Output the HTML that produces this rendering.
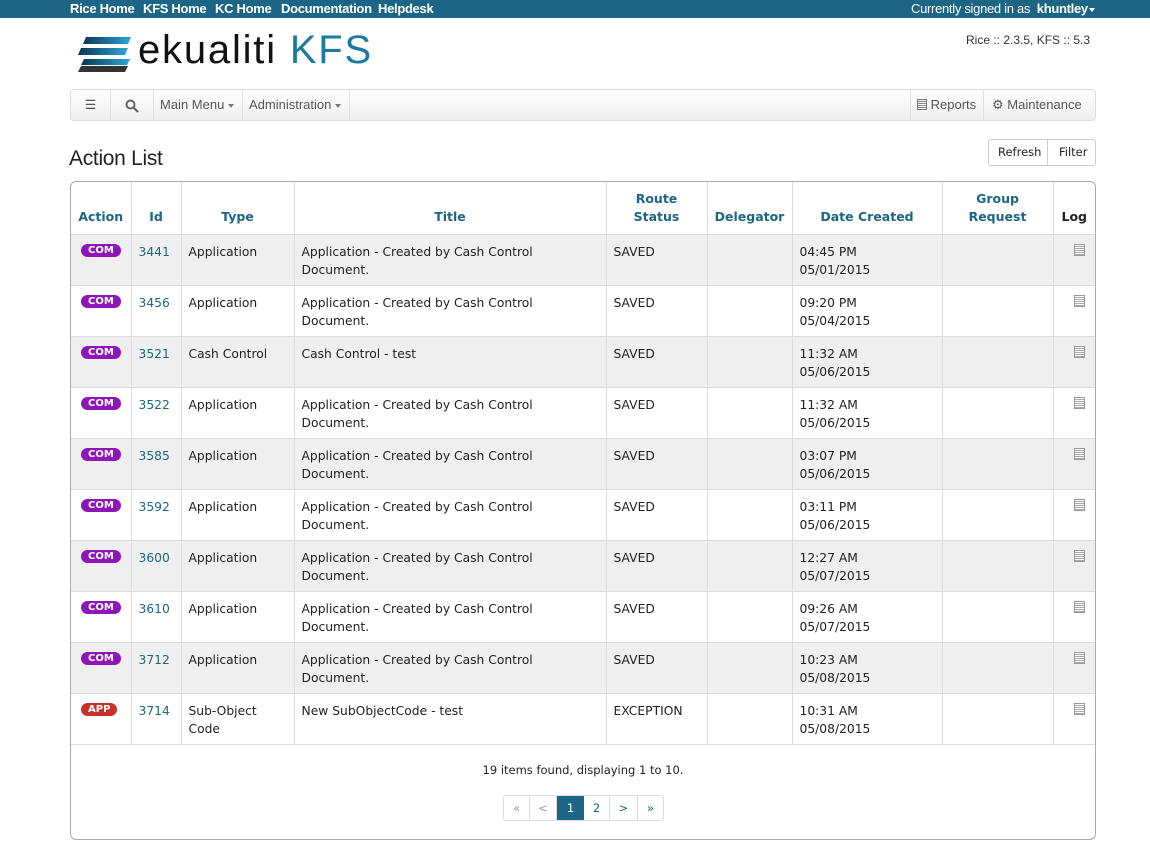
<!DOCTYPE html>
<html><head><meta charset="utf-8"><style>
*{box-sizing:border-box}
body{margin:0;width:1150px;height:861px;background:#fff;font-family:"Liberation Sans",Arial,sans-serif;position:relative;overflow:hidden}
.top{position:absolute;left:0;top:0;width:1150px;height:18px;background:#1c6584;color:#fff;font-size:13px;font-weight:bold;line-height:17px;letter-spacing:-0.3px}
.top span{margin-right:11px}
.nav{position:absolute;left:70px;top:89px;width:1026px;height:32px;border:1px solid #ddd;border-radius:4px;background:linear-gradient(#fff,#efefef);font-size:13px;color:#555}
.nav div{position:absolute;top:0;height:30px;line-height:30px;border-right:1px solid #e0e0e0}
.caret{display:inline-block;border-top:4px solid #777;border-left:3px solid transparent;border-right:3px solid transparent;vertical-align:middle;margin-left:4px}
table{border-collapse:collapse;font-family:"DejaVu Sans",Verdana,sans-serif;font-size:12.3px;color:#222}
td,th{border-left:1px solid #ddd;border-bottom:1px solid #ddd;vertical-align:top;padding:8px 7px 0}
td:first-child,th:first-child{border-left:none}
td:first-child{padding-left:10px}
th{color:#1c6584;font-size:12.5px;vertical-align:bottom;padding:0 4px 8px;line-height:18px;height:52px}
tr.g td{background:#efefef}
td{height:51px;line-height:18px}
.b{display:inline-block;color:#fff;font-size:10px;font-weight:bold;border-radius:8px;padding:0 7px;line-height:13px;vertical-align:top;margin-top:1px}
.id{color:#1c6584}
.log{display:inline-block;width:11px;height:12px;border:1px solid #999;background:repeating-linear-gradient(#fff 0 1px,#aaa 1px 2px);margin-left:13px}
</style></head><body>
<div class="top"><span style="position:absolute;left:70px">Rice Home</span><span style="position:absolute;left:143px">KFS Home</span><span style="position:absolute;left:215px">KC Home</span><span style="position:absolute;left:281px">Documentation</span><span style="position:absolute;left:378px">Helpdesk</span><span style="position:absolute;left:911px;font-weight:normal">Currently signed in as &nbsp;<b>khuntley</b><span class="caret" style="border-top-color:#fff;margin-left:1px"></span></span></div>
<svg style="position:absolute;left:78px;top:36px" width="54" height="38"><defs><linearGradient id="g" x1="0" x2="1"><stop offset="0" stop-color="#0a3550"/><stop offset="1" stop-color="#2ea6d8"/></linearGradient></defs><polygon points="8,1 53,1 50,8 5,8" fill="url(#g)"/><polygon points="3,12 50,12 47,19 0,19" fill="url(#g)"/><polygon points="6,23 52,23 49,29 3,29" fill="url(#g)"/><polygon points="3,30 50,30 47,36 0,36" fill="#333"/></svg>
<div style="position:absolute;left:138px;top:28px;font-size:40px;color:#111;letter-spacing:1.8px">ekualiti <span style="color:#1c7aa0">KFS</span></div>
<div style="position:absolute;left:966px;top:33px;font-size:12px;color:#333">Rice :: 2.3.5, KFS :: 5.3</div>
<div class="nav">
<div style="left:0;width:40px;text-align:center;color:#555">&#9776;</div>
<div style="left:40px;width:43px;text-align:center"><svg width="14" height="14" style="vertical-align:middle"><circle cx="5.5" cy="5.5" r="4" fill="none" stroke="#666" stroke-width="2"/><line x1="8.5" y1="8.5" x2="13" y2="13" stroke="#666" stroke-width="2.2"/></svg></div>
<div style="left:83px;width:89px;padding-left:6px">Main Menu<span class="caret"></span></div>
<div style="left:172px;width:107px;padding-left:6px">Administration<span class="caret"></span></div>
<div style="left:839px;width:72px;padding-left:6px;border-left:1px solid #e0e0e0;border-right:none"><span style="display:inline-block;width:10px;height:11px;border:1px solid #777;background:repeating-linear-gradient(#fff 0 1px,#888 1px 2px);vertical-align:-1px"></span> Reports</div>
<div style="left:912px;width:110px;padding-left:8px;border-left:1px solid #e0e0e0;border-right:none">&#9881; Maintenance</div>
</div>
<div style="position:absolute;left:69px;top:147px;font-size:21px;color:#222;letter-spacing:-0.3px">Action List</div>
<div style="position:absolute;left:988px;top:139px;width:108px;height:27px;border:1px solid #ccc;border-radius:3px;font-family:'DejaVu Sans',sans-serif;font-size:11.5px;color:#222;line-height:25px"><span style="position:absolute;left:9px">Refresh</span><span style="position:absolute;left:58px;top:0;height:25px;border-left:1px solid #ccc;padding-left:11px">Filter</span></div>
<div style="position:absolute;left:70px;top:181px;width:1026px;height:659px;border:1px solid #aaa;border-radius:6px;overflow:hidden">
<table style="width:1024px">
<tr><th style="width:60px">Action</th><th style="width:50px">Id</th><th style="width:113px">Type</th><th style="width:312px">Title</th><th style="width:101px">Route<br>Status</th><th style="width:85px">Delegator</th><th style="width:150px">Date Created</th><th style="width:111px">Group<br>Request</th><th style="color:#222">Log</th></tr>
<tr class="g"><td><span class="b" style="background:#8e16b9">COM</span></td><td class="id">3441</td><td>Application</td><td>Application - Created by Cash Control Document.</td><td>SAVED</td><td></td><td>04:45 PM<br>05/01/2015</td><td></td><td><span class="log"></span></td></tr>
<tr><td><span class="b" style="background:#8e16b9">COM</span></td><td class="id">3456</td><td>Application</td><td>Application - Created by Cash Control Document.</td><td>SAVED</td><td></td><td>09:20 PM<br>05/04/2015</td><td></td><td><span class="log"></span></td></tr>
<tr class="g"><td><span class="b" style="background:#8e16b9">COM</span></td><td class="id">3521</td><td>Cash Control</td><td>Cash Control - test</td><td>SAVED</td><td></td><td>11:32 AM<br>05/06/2015</td><td></td><td><span class="log"></span></td></tr>
<tr><td><span class="b" style="background:#8e16b9">COM</span></td><td class="id">3522</td><td>Application</td><td>Application - Created by Cash Control Document.</td><td>SAVED</td><td></td><td>11:32 AM<br>05/06/2015</td><td></td><td><span class="log"></span></td></tr>
<tr class="g"><td><span class="b" style="background:#8e16b9">COM</span></td><td class="id">3585</td><td>Application</td><td>Application - Created by Cash Control Document.</td><td>SAVED</td><td></td><td>03:07 PM<br>05/06/2015</td><td></td><td><span class="log"></span></td></tr>
<tr><td><span class="b" style="background:#8e16b9">COM</span></td><td class="id">3592</td><td>Application</td><td>Application - Created by Cash Control Document.</td><td>SAVED</td><td></td><td>03:11 PM<br>05/06/2015</td><td></td><td><span class="log"></span></td></tr>
<tr class="g"><td><span class="b" style="background:#8e16b9">COM</span></td><td class="id">3600</td><td>Application</td><td>Application - Created by Cash Control Document.</td><td>SAVED</td><td></td><td>12:27 AM<br>05/07/2015</td><td></td><td><span class="log"></span></td></tr>
<tr><td><span class="b" style="background:#8e16b9">COM</span></td><td class="id">3610</td><td>Application</td><td>Application - Created by Cash Control Document.</td><td>SAVED</td><td></td><td>09:26 AM<br>05/07/2015</td><td></td><td><span class="log"></span></td></tr>
<tr class="g"><td><span class="b" style="background:#8e16b9">COM</span></td><td class="id">3712</td><td>Application</td><td>Application - Created by Cash Control Document.</td><td>SAVED</td><td></td><td>10:23 AM<br>05/08/2015</td><td></td><td><span class="log"></span></td></tr>
<tr><td><span class="b" style="background:#c9302c">APP</span></td><td class="id">3714</td><td>Sub-Object Code</td><td>New SubObjectCode - test</td><td>EXCEPTION</td><td></td><td>10:31 AM<br>05/08/2015</td><td></td><td><span class="log"></span></td></tr>
</table>
<div style="position:absolute;left:0;width:1024px;top:581px;text-align:center;font-family:'DejaVu Sans',sans-serif;font-size:11.5px;color:#222">19 items found, displaying 1 to 10.</div>
<div style="position:absolute;left:432px;top:613px;height:26px;display:flex;border:1px solid #ddd;border-radius:3px;font-family:'DejaVu Sans',sans-serif;font-size:11.5px;line-height:24px;overflow:hidden">
<span style="width:26px;text-align:center;color:#999;border-right:1px solid #ddd">«</span><span style="width:27px;text-align:center;color:#999;border-right:1px solid #ddd">&lt;</span><span style="width:27px;text-align:center;color:#fff;background:#1c6584">1</span><span style="width:26px;text-align:center;color:#1c6584;border-right:1px solid #ddd">2</span><span style="width:28px;text-align:center;color:#1c6584;border-right:1px solid #ddd">&gt;</span><span style="width:25px;text-align:center;color:#1c6584">»</span></div>
</div>
</body></html>
